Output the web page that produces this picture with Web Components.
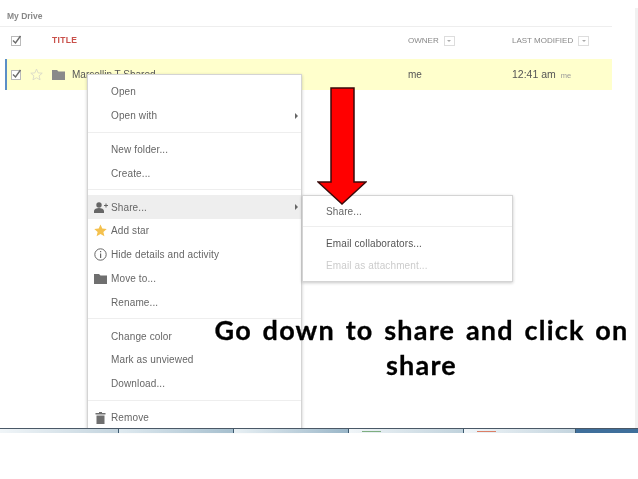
<!DOCTYPE html>
<html>
<head>
<meta charset="utf-8">
<title>My Drive</title>
<style>
  html, body { margin: 0; padding: 0; background: #fff; }
</style>
</head>
<body>
<gd-slide>
  <gd-list-title>My Drive</gd-list-title>
  <gd-row head>
    <gd-check slot="check"></gd-check>
    <span slot="name" style="color:#c9504a;font-weight:bold;font-size:8.5px;letter-spacing:.3px">TITLE</span>
    <gd-sort slot="owner">OWNER</gd-sort>
    <gd-sort slot="modified">LAST MODIFIED</gd-sort>
  </gd-row>
  <gd-row selected>
    <gd-check slot="check"></gd-check>
    <svg slot="star" width="13" height="13" viewBox="0 0 24 24"><path d="M12 2l3 7 7.5.6-5.700 4.900 1.800 7.300L12 18l-6.600 3.800 1.800-7.300L1.500 9.600 9 9z" fill="none" stroke="#d8d8c8" stroke-width="1.600"/></svg>
    <span slot="name" style="display:flex;align-items:center;gap:7px">
      <svg width="13" height="11" viewBox="0 0 13 11"><path d="M0 1h5l1.500 1.500H13V11H0z" fill="#8a8a8a"/></svg>Marcellin T Shared</span>
    <span slot="owner">me</span>
    <span slot="modified" style="font-size:10.500px">12:41 am <small style="font-size:7.500px;color:#999;margin-left:2px">me</small></span>
  </gd-row>

  <gd-menu style="left:87px;top:74px;width:215px;padding-top:5px">
    <gd-item>Open</gd-item>
    <gd-item sub>Open with</gd-item>
    <gd-sep></gd-sep>
    <gd-item>New folder...</gd-item>
    <gd-item>Create...</gd-item>
    <gd-sep></gd-sep>
    <gd-item sub active>
      <svg slot="icon" width="14" height="11" viewBox="0 0 14 11"><circle cx="5" cy="3" r="2.700" fill="#666"/><path d="M0 11V9c0-2 2.500-3 5-3s5 1 5 3v2z" fill="#666"/><path d="M10 3h1.500V1.500h1V3H14v1h-1.500v1.500h-1V4H10z" fill="#666"/></svg>Share...</gd-item>
    <gd-item>
      <svg slot="icon" width="13" height="13" viewBox="0 0 24 24"><path d="M12 1l3.300 7.500 8.200.8-6.200 5.400 1.900 8L12 18.500l-7.200 4.200 1.900-8L.5 9.300l8.200-.8z" fill="#f4c14e"/></svg>Add star</gd-item>
    <gd-item>
      <svg slot="icon" width="13" height="13" viewBox="0 0 13 13"><circle cx="6.500" cy="6.500" r="5.700" fill="none" stroke="#666" stroke-width="1"/><path d="M6 3h1.200v1.300H6zM6 5.500h1.200V10H6z" fill="#666"/></svg>Hide details and activity</gd-item>
    <gd-item>
      <svg slot="icon" width="13" height="11" viewBox="0 0 13 11"><path d="M0 1h5l1.500 1.500H13V11H0z" fill="#6f6f6f"/></svg>Move to...</gd-item>
    <gd-item>Rename...</gd-item>
    <gd-sep></gd-sep>
    <gd-item>Change color</gd-item>
    <gd-item>Mark as unviewed</gd-item>
    <gd-item>Download...</gd-item>
    <gd-sep></gd-sep>
    <gd-item>
      <svg slot="icon" width="11" height="13" viewBox="0 0 11 13"><path d="M.5 2H4V1h3v1h3.500v1.500H.5zM1.500 4.500h8V13h-8z" fill="#6f6f6f"/></svg>Remove</gd-item>
  </gd-menu>

  <gd-menu style="left:302px;top:195px;width:211px;padding:4px 0 5px">
    <gd-item short>Share...</gd-item>
    <gd-sep></gd-sep>
    <gd-item short style="color:#555">Email collaborators...</gd-item>
    <gd-item short disabled>Email as attachment...</gd-item>
  </gd-menu>

  <gd-arrow></gd-arrow>
  <gd-caption>Go down to share and click on share</gd-caption>
  <gd-taskbar></gd-taskbar>
</gd-slide>

<script>
  class Slide extends HTMLElement {
    constructor() {
      super();
      this.attachShadow({ mode: "open" });
      this.shadowRoot.innerHTML = `
        <style>
          :host {
            display: flex;
            flex-direction: column;
            position: relative;
            width: 638px;
            height: 479px;
            overflow: hidden;
            background: #fff;
            color: #555;
            font-family: "Liberation Sans", Arial, sans-serif;
            font-size: 10px;
            filter: blur(.3px);
          }
          .edge {
            position: absolute;
            right: 0;
            top: 8px;
            bottom: 50px;
            width: 3px;
            background: #f1f1f1;
          }
        </style>
        <div class="edge"></div>
        <slot></slot>
      `;
    }
  }

  class ListTitle extends HTMLElement {
    constructor() {
      super();
      this.attachShadow({ mode: "open" });
      this.shadowRoot.innerHTML = `
        <style>
          :host {
            display: flex;
            align-items: center;
            box-sizing: border-box;
            height: 27px;
            width: 612px;
            padding: 5px 0 0 7px;
            border-bottom: 1px solid #eee;
            color: #888;
            font-size: 8.5px;
            font-weight: bold;
          }
        </style>
        <slot></slot>
      `;
    }
  }

  class Row extends HTMLElement {
    constructor() {
      super();
      this.attachShadow({ mode: "open" });
      this.shadowRoot.innerHTML = `
        <style>
          :host {
            display: grid;
            grid-template-columns: 19px 22px 356px 104px 1fr;
            align-items: center;
            box-sizing: border-box;
            height: 31.500px;
            width: 607px;
            margin-left: 5px;
            padding-left: 4px;
            border-left: 2px solid transparent;
            color: #555;
            font-size: 10px;
          }
          :host([head]) { padding-bottom: 5px; }
          :host([selected]) {
            background: #ffffcc;
            border-left-color: #5b8fc7;
          }
          div { display: flex; align-items: center; }
        </style>
        <div><slot name="check"></slot></div>
        <div><slot name="star"></slot></div>
        <div><slot name="name"></slot></div>
        <div><slot name="owner"></slot></div>
        <div><slot name="modified"></slot></div>
      `;
    }
  }

  class Check extends HTMLElement {
    constructor() {
      super();
      this.attachShadow({ mode: "open" });
      this.shadowRoot.innerHTML = `
        <style>
          :host { display: block; width: 11px; height: 11px; }
          svg { display: block; }
        </style>
        <svg width="11" height="11" viewBox="0 0 11 11">
          <rect x=".5" y="1.500" width="9" height="9" fill="#fff" stroke="#bbb"/>
          <path d="M2 5.500l2.500 2.500L9.500 1" fill="none" stroke="#6a6a6a" stroke-width="1.400"/>
        </svg>
      `;
    }
  }

  class Sort extends HTMLElement {
    constructor() {
      super();
      this.attachShadow({ mode: "open" });
      this.shadowRoot.innerHTML = `
        <style>
          :host {
            display: inline-flex;
            align-items: center;
            gap: 5px;
            color: #888;
            font-size: 8px;
          }
          i {
            display: flex;
            align-items: center;
            justify-content: center;
            box-sizing: border-box;
            width: 11px;
            height: 10px;
            margin-top: 2px;
            border: 1px solid #ddd;
          }
          i::after {
            content: "";
            border: 2.500px solid transparent;
            border-top-color: #aaa;
            border-bottom-width: 0;
          }
        </style>
        <slot></slot><i></i>
      `;
    }
  }

  class Menu extends HTMLElement {
    constructor() {
      super();
      this.attachShadow({ mode: "open" });
      this.shadowRoot.innerHTML = `
        <style>
          :host {
            display: block;
            position: absolute;
            box-sizing: border-box;
            background: #fff;
            border: 1px solid #d4d4d4;
            box-shadow: 0 1px 3px rgba(0, 0, 0, .22);
            color: #666;
            font-size: 10px;
          }
        </style>
        <slot></slot>
      `;
    }
  }

  class Item extends HTMLElement {
    constructor() {
      super();
      this.attachShadow({ mode: "open" });
      this.shadowRoot.innerHTML = `
        <style>
          :host {
            display: flex;
            align-items: center;
            position: relative;
            height: 23.800px;
            padding-left: 23px;
            letter-spacing: .12px;
            white-space: nowrap;
          }
          :host([short]) { height: 22px; }
          :host([active]) { background: #eeeeee; }
          :host([disabled]) { color: #ccc; }
          .icon {
            position: absolute;
            left: 5px;
            top: 0;
            bottom: 0;
            width: 15px;
            display: flex;
            align-items: center;
            justify-content: center;
          }
          :host([sub])::after {
            content: "";
            position: absolute;
            right: 3px;
            top: 9px;
            border: 3px solid transparent;
            border-left-color: #666;
            border-right-width: 0;
          }
        </style>
        <span class="icon"><slot name="icon"></slot></span>
        <slot></slot>
      `;
    }
  }

  class Sep extends HTMLElement {
    constructor() {
      super();
      this.attachShadow({ mode: "open" });
      this.shadowRoot.innerHTML = `
        <style>
          :host {
            display: block;
            height: 1px;
            margin: 4px 0 5px;
            background: #eeeeee;
          }
        </style>
      `;
    }
  }

  class Arrow extends HTMLElement {
    constructor() {
      super();
      this.attachShadow({ mode: "open" });
      this.shadowRoot.innerHTML = `
        <style>
          :host { display: block; position: absolute; left: 317px; top: 87px; }
          svg { display: block; }
        </style>
        <svg width="50" height="119" viewBox="0 0 50 119">
          <path d="M14 1h23v94h12L25 117 1 95h13z" fill="#ff0000" stroke="#3a0a0a" stroke-width="1.500" stroke-linejoin="miter"/>
        </svg>
      `;
    }
  }

  class Caption extends HTMLElement {
    constructor() {
      super();
      this.attachShadow({ mode: "open" });
      this.shadowRoot.innerHTML = `
        <style>
          :host {
            display: block;
            position: absolute;
            left: 205px;
            top: 312px;
            width: 433px;
            text-align: center;
            color: #000;
            font-family: "Comic Sans MS", "Lato", sans-serif;
            font-size: 27px;
            line-height: 35px;
            font-weight: bold;
            letter-spacing: 1.200px;
            word-spacing: 3px;
            -webkit-text-stroke: .3px #000;
          }
        </style>
        <slot></slot>
      `;
    }
  }

  class Taskbar extends HTMLElement {
    constructor() {
      super();
      this.attachShadow({ mode: "open" });
      this.shadowRoot.innerHTML = `
        <style>
          :host {
            display: grid;
            grid-template-columns: 119px 115px 115px 115px 112px 1fr;
            position: absolute;
            left: 0;
            right: 0;
            top: 428px;
            height: 4px;
            border-top: 1px solid #4a5866;
            background: #fff;
          }
          div {
            position: relative;
            border-right: 1px solid #3d5a70;
            background: linear-gradient(90deg, #d8e6ee, #9dbacb);
          }
          div:nth-child(even) { background: linear-gradient(90deg, #f0f5f8, #c3d4de); }
          div:nth-child(3) { background: linear-gradient(90deg, #dfeaf0, #a6bfce); }
          div:nth-child(4) { background: linear-gradient(90deg, #e8f0f4, #9ab6c8); }
          div:nth-child(5) { background: linear-gradient(90deg, #f0f5f8, #c0d2dc); }
          .end { border: 0; background: #3f6f9b !important; }
          b { position: absolute; left: 13px; top: 2px; width: 19px; height: 1px; }
        </style>
        <div></div>
        <div></div>
        <div></div>
        <div><b style="background:#7fae7f"></b></div>
        <div><b style="background:#dc7f66"></b></div>
        <div class="end"></div>
      `;
    }
  }

  customElements.define("gd-slide", Slide);
  customElements.define("gd-list-title", ListTitle);
  customElements.define("gd-row", Row);
  customElements.define("gd-check", Check);
  customElements.define("gd-sort", Sort);
  customElements.define("gd-menu", Menu);
  customElements.define("gd-item", Item);
  customElements.define("gd-sep", Sep);
  customElements.define("gd-arrow", Arrow);
  customElements.define("gd-caption", Caption);
  customElements.define("gd-taskbar", Taskbar);
</script>
</body>
</html>
